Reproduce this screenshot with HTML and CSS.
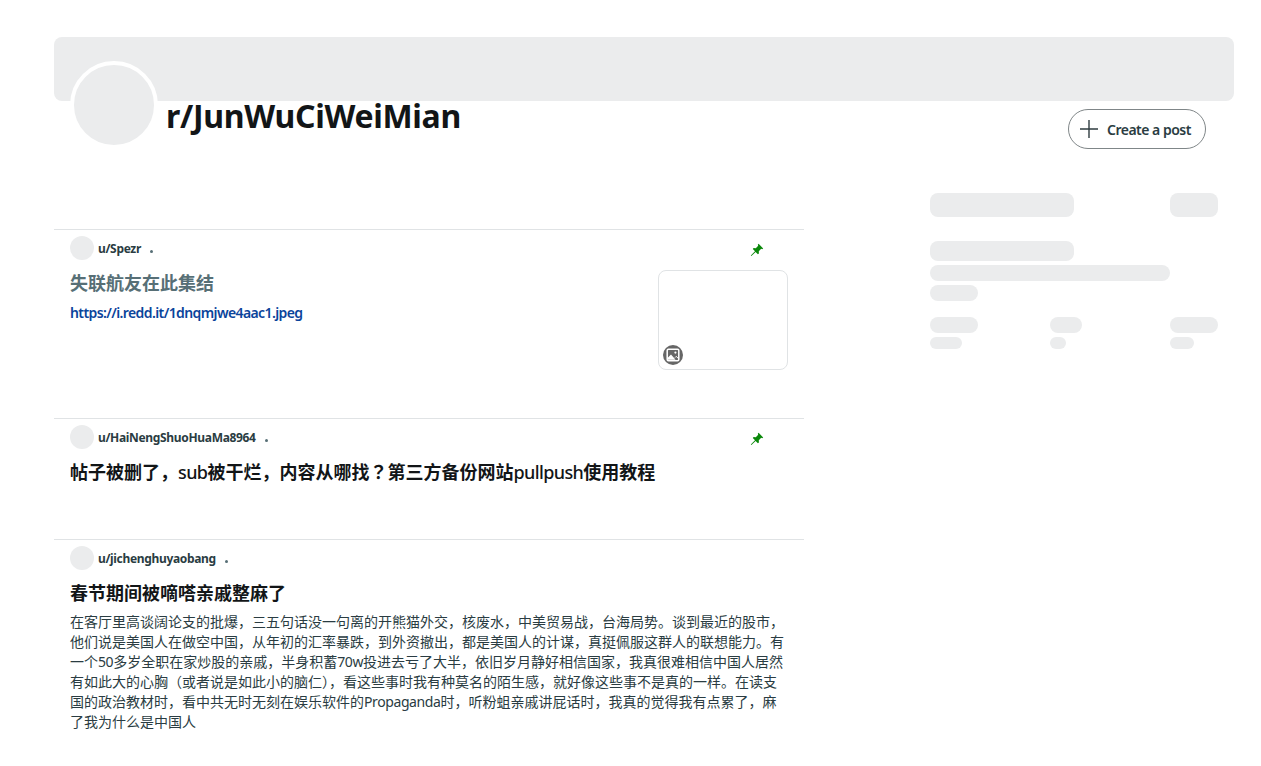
FILE: index.html
```html
<!DOCTYPE html>
<html lang="zh">
<head>
<meta charset="utf-8">
<title>r/JunWuCiWeiMian</title>
<link rel="stylesheet" href="styles.css">
</head>
<body>
<div class="page">
  <header class="header">
    <div class="banner"></div>
    <div class="identity">
      <div class="community">
        <div class="avatar"></div>
        <h1 class="name">r/JunWuCiWeiMian</h1>
      </div>
      <button class="create">
        <svg class="plus" viewBox="0 0 20 20" width="20" height="20"><path d="M10 1v18M1 10h18" fill="none" stroke="#2f3c40" stroke-width="1.4"/></svg>
        <span>Create a post</span>
      </button>
    </div>
  </header>
  <div class="columns">
    <main class="feed">
      <article class="post post-first">
        <div class="meta">
          <span class="user-icon"></span><span class="author">u/Spezr</span><span class="dot"></span>
          <svg class="pin" viewBox="0 0 14 14" width="14" height="14"><path d="M8.6 0.8 13.2 5.4 12.2 6.2 11.2 5.8 8.8 8.2 8.9 10.4 7.9 11.2 5.6 8.9 1.4 13 0.8 12.4 5 8.2 2.8 6 3.6 5.1 5.8 5.2 8.2 2.8 7.8 1.8Z"/></svg>
        </div>
        <div class="media-row">
          <div class="media-text">
            <h2 class="title title-visited">失联航友在此集结</h2>
            <a class="link" href="#">https://i.redd.it/1dnqmjwe4aac1.jpeg</a>
          </div>
          <div class="thumb">
            <span class="thumb-badge">
              <svg viewBox="0 0 14 14" width="14" height="14"><rect x="1.2" y="1.2" width="11.6" height="11.6" rx="1.2" fill="none" stroke="#fff" stroke-width="1.5"/><path d="M1.5 10 5 6.6 9.6 11.8H1.5z" fill="#fff"/><path d="M9 9.6 10.2 8.4 12.5 10.6" fill="none" stroke="#fff" stroke-width="1"/><circle cx="9.4" cy="4.6" r="1.1" fill="#fff"/></svg>
            </span>
          </div>
        </div>
      </article>
      <article class="post post-second">
        <div class="meta">
          <span class="user-icon"></span><span class="author">u/HaiNengShuoHuaMa8964</span><span class="dot"></span>
          <svg class="pin" viewBox="0 0 14 14" width="14" height="14"><path d="M8.6 0.8 13.2 5.4 12.2 6.2 11.2 5.8 8.8 8.2 8.9 10.4 7.9 11.2 5.6 8.9 1.4 13 0.8 12.4 5 8.2 2.8 6 3.6 5.1 5.8 5.2 8.2 2.8 7.8 1.8Z"/></svg>
        </div>
        <h2 class="title title-mixed">帖子被删了，<span class="latin">sub</span>被干烂，内容从哪找<span class="tc" lang="zh-Hant">？</span>第三方备份网站<span class="latin">pullpush</span>使用教程</h2>
      </article>
      <article class="post">
        <div class="meta">
          <span class="user-icon"></span><span class="author">u/jichenghuyaobang</span><span class="dot"></span>
        </div>
        <h2 class="title">春节期间被嘀嗒亲戚整麻了</h2>
        <p class="body-text">在客厅里高谈阔论支的批爆，三五句话没一句离的开熊猫外交，核废水，中美贸易战，台海局势。谈到最近的股市，他们说是美国人在做空中国，从年初的汇率暴跌，到外资撤出，都是美国人的计谋，真挺佩服这群人的联想能力。有一个<span class="latin-body">50</span>多岁全职在家炒股的亲戚，半身积蓄<span class="latin-body">70w</span>投进去亏了大半，依旧岁月静好相信国家，我真很难相信中国人居然有如此大的心胸（或者说是如此小的脑仁），看这些事时我有种莫名的陌生感，就好像这些事不是真的一样。在读支国的政治教材时，看中共无时无刻在娱乐软件的<span class="latin-body">Propaganda</span>时，听粉蛆亲戚讲屁话时，我真的觉得我有点累了，麻了我为什么是中国人</p>
      </article>
    </main>
    <aside class="sidebar">
      <div class="sk-head">
        <span class="sk sk-h24 sk-w144"></span>
        <span class="sk sk-h24 sk-w48"></span>
      </div>
      <div class="sk-about">
        <span class="sk sk-h20 sk-w144"></span>
        <span class="sk sk-h16 sk-w240"></span>
        <span class="sk sk-h16 sk-w48"></span>
      </div>
      <div class="sk-stats">
        <div class="sk-stat"><span class="sk sk-h16 sk-w48"></span><span class="sk sk-h12 sk-w32"></span></div>
        <div class="sk-stat"><span class="sk sk-h16 sk-w32"></span><span class="sk sk-h12 sk-w16"></span></div>
        <div class="sk-stat"><span class="sk sk-h16 sk-w48"></span><span class="sk sk-h12 sk-w24"></span></div>
      </div>
    </aside>
  </div>
</div>
</body>
</html>
```
FILE: styles.css
```css
* { box-sizing: border-box; }
html, body { margin: 0; padding: 0; background: #fff; }
body {
  font-family: "Noto Sans", "Noto Sans CJK SC", sans-serif;
  color: #181c1f;
  overflow: hidden;
  height: 766px;
}
.page { padding: 37px 27px 0 54px; }
.header { margin-bottom: 80px; }
.banner { height: 64px; background: #ebeced; border-radius: 8px; }
.identity {
  display: flex;
  justify-content: space-between;
  align-items: flex-start;
  padding: 0 28px 0 16px;
  margin-top: -40px;
  height: 88px;
}
.community { display: flex; align-items: flex-start; gap: 8px; }
.avatar {
  width: 88px;
  height: 88px;
  border-radius: 50%;
  background: #ebeced;
  border: 4px solid #fff;
}
.name {
  margin: 35px 0 0;
  font-size: 32px;
  line-height: 40px;
  font-weight: 700;
  letter-spacing: -0.32px;
  color: #121517;
}
.create {
  margin-top: 48px;
  height: 40px;
  width: 138px;
  display: flex;
  align-items: center;
  gap: 8px;
  padding: 0 0 0 10px;
  background: #fff;
  border: 1px solid #7f8688;
  border-radius: 20px;
  font: 600 14px/20px "Noto Sans", sans-serif;
  letter-spacing: -0.5px;
  color: #2a3c42;
}
.create span { position: relative; top: 1px; }
.columns { display: flex; align-items: flex-start; }
.feed { width: 750px; flex: none; }
.post { border-top: 1px solid #e0e3e5; padding: 6px 16px 0; }
.post-first { height: 189px; }
.post-second { height: 121px; }
.meta { display: flex; align-items: center; height: 24px; }
.user-icon { width: 24px; height: 24px; border-radius: 50%; background: #ebeced; margin-right: 4px; }
.author {
  font-size: 12px;
  line-height: 16px;
  font-weight: 700;
  letter-spacing: -0.33px;
  color: #2a3c42;
  position: relative;
  top: 1px;
}
.dot {
  width: 3px;
  height: 3px;
  border-radius: 50%;
  background: #576f76;
  margin-left: 9px;
  position: relative;
  top: 3px;
}
.pin {
  margin-left: auto;
  margin-right: 24px;
  position: relative;
  top: 2px;
  fill: #0a880a;
}
.title {
  margin: 9px 0 0;
  font-size: 18px;
  line-height: 28px;
  font-weight: 600;
  color: #121517;
}
.title-mixed { margin-top: 8px; }
.title-visited { color: #576f76; margin: 0; }
.latin { font-weight: 500; letter-spacing: -0.6px; }
.tc { font-family: "Noto Sans CJK TC", sans-serif; }
.media-row { display: flex; justify-content: space-between; align-items: flex-start; margin-top: 9px; }
.link {
  display: block;
  margin-top: 6px;
  font-size: 14px;
  line-height: 20px;
  font-weight: 600;
  letter-spacing: -0.6px;
  color: #0a449b;
  text-decoration: none;
}
.thumb {
  width: 130px;
  height: 100px;
  margin-top: 1px;
  border: 1px solid #e0e3e5;
  border-radius: 8px;
  position: relative;
}
.thumb-badge {
  position: absolute;
  left: 4px;
  bottom: 4px;
  width: 20px;
  height: 20px;
  border-radius: 50%;
  background: #666;
  display: flex;
  align-items: center;
  justify-content: center;
}
.body-text {
  margin: 5px 0 0;
  font-size: 14px;
  line-height: 20px;
  color: #2a3c42;
}
.latin-body { letter-spacing: -0.4px; }
.sidebar { width: 288px; margin: -36px 0 0 126px; flex: none; }
.sk { display: block; background: #ebeced; border-radius: 8px; }
.sk-h24 { height: 24px; }
.sk-h20 { height: 20px; }
.sk-h16 { height: 16px; }
.sk-h12 { height: 12px; }
.sk-w240 { width: 240px; }
.sk-w144 { width: 144px; }
.sk-w48 { width: 48px; }
.sk-w32 { width: 32px; }
.sk-w24 { width: 24px; }
.sk-w16 { width: 16px; }
.sk-head { display: flex; justify-content: space-between; margin-bottom: 24px; }
.sk-about { display: flex; flex-direction: column; gap: 4px; margin-bottom: 16px; }
.sk-stats { display: grid; grid-template-columns: 120px 120px 48px; }
.sk-stat { display: flex; flex-direction: column; gap: 4px; }
```
